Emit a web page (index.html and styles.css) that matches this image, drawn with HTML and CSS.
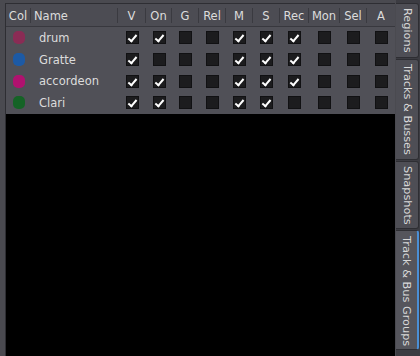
FILE: index.html
```html
<!DOCTYPE html>
<html lang="en">
<head>
    <meta charset="UTF-8">
    <title>Track & Bus Groups</title>
    <link rel="stylesheet" href="styles.css">
</head>
<body>
    <div class="window">
        <div class="main">
            <div class="tree">
                <div class="row head">
                    <div class="cell col-c sep">Col</div>
                    <div class="cell col-n sep">Name</div>
                    <div class="cell sep">V</div>
                    <div class="cell sep">On</div>
                    <div class="cell sep">G</div>
                    <div class="cell sep">Rel</div>
                    <div class="cell sep">M</div>
                    <div class="cell sep">S</div>
                    <div class="cell sep">Rec</div>
                    <div class="cell sep">Mon</div>
                    <div class="cell sep">Sel</div>
                    <div class="cell">A</div>
                </div>
                <div class="row">
                    <div class="cell col-c"><span class="swatch drum"></span></div>
                    <div class="cell col-n name">drum</div>
                    <div class="cell"><span class="box on"></span></div>
                    <div class="cell"><span class="box on"></span></div>
                    <div class="cell"><span class="box"></span></div>
                    <div class="cell"><span class="box"></span></div>
                    <div class="cell"><span class="box on"></span></div>
                    <div class="cell"><span class="box on"></span></div>
                    <div class="cell"><span class="box on"></span></div>
                    <div class="cell"><span class="box"></span></div>
                    <div class="cell"><span class="box"></span></div>
                    <div class="cell"><span class="box"></span></div>
                </div>
                <div class="row">
                    <div class="cell col-c"><span class="swatch gratte"></span></div>
                    <div class="cell col-n name">Gratte</div>
                    <div class="cell"><span class="box on"></span></div>
                    <div class="cell"><span class="box"></span></div>
                    <div class="cell"><span class="box"></span></div>
                    <div class="cell"><span class="box"></span></div>
                    <div class="cell"><span class="box on"></span></div>
                    <div class="cell"><span class="box on"></span></div>
                    <div class="cell"><span class="box on"></span></div>
                    <div class="cell"><span class="box"></span></div>
                    <div class="cell"><span class="box"></span></div>
                    <div class="cell"><span class="box"></span></div>
                </div>
                <div class="row">
                    <div class="cell col-c"><span class="swatch accordeon"></span></div>
                    <div class="cell col-n name">accordeon</div>
                    <div class="cell"><span class="box on"></span></div>
                    <div class="cell"><span class="box on"></span></div>
                    <div class="cell"><span class="box"></span></div>
                    <div class="cell"><span class="box"></span></div>
                    <div class="cell"><span class="box on"></span></div>
                    <div class="cell"><span class="box on"></span></div>
                    <div class="cell"><span class="box on"></span></div>
                    <div class="cell"><span class="box"></span></div>
                    <div class="cell"><span class="box"></span></div>
                    <div class="cell"><span class="box"></span></div>
                </div>
                <div class="row">
                    <div class="cell col-c"><span class="swatch clari"></span></div>
                    <div class="cell col-n name">Clari</div>
                    <div class="cell"><span class="box on"></span></div>
                    <div class="cell"><span class="box on"></span></div>
                    <div class="cell"><span class="box"></span></div>
                    <div class="cell"><span class="box"></span></div>
                    <div class="cell"><span class="box on"></span></div>
                    <div class="cell"><span class="box on"></span></div>
                    <div class="cell"><span class="box"></span></div>
                    <div class="cell"><span class="box"></span></div>
                    <div class="cell"><span class="box"></span></div>
                    <div class="cell"><span class="box"></span></div>
                </div>
                <div class="empty"></div>
            </div>
        </div>
        <div class="tabs">
            <div class="tab">Regions</div>
            <div class="tab">Tracks &amp; Busses</div>
            <div class="tab">Snapshots</div>
            <div class="tab active">Track &amp; Bus Groups</div>
        </div>
    </div>
</body>
</html>
```

FILE: styles.css
```css
* {
    box-sizing: border-box;
    margin: 0;
    padding: 0;
}
body {
    width: 420px;
    height: 356px;
    background: #3c3c42;
    font-family: "DejaVu Sans", sans-serif;
    font-size: 11px;
    color: #dcdcdc;
    overflow: hidden;
}
.window {
    display: flex;
    height: 356px;
}
.main {
    flex: 1;
    display: flex;
    padding: 3px 1px 0 5px;
    background: #4a4a50;
}
.tree {
    flex: 1;
    display: flex;
    flex-direction: column;
    border-left: 1px solid #2e2e33;
    border-top: 1px solid #2e2e33;
}
.row {
    display: grid;
    grid-template-columns: 25px 87px 28px 26px 27px 27px 27px 27px 29px 31px 27px 1fr;
    height: 21.7px;
    background: #505057;
}
.row.head {
    height: 23px;
    padding-top: 1px;
    font-size: 11.5px;
    background: #4c4c53;
    border-bottom: 1px solid #38383e;
}
.cell {
    display: flex;
    align-items: center;
    justify-content: center;
}
.head .cell.sep {
    border-right: 1px solid #3a3a40;
    margin: 3px 0;
}
.head .col-n {
    justify-content: flex-start;
    padding-left: 3px;
}
.name {
    justify-content: flex-start;
    padding-left: 8px;
    font-size: 11.5px;
}
.swatch {
    width: 12px;
    height: 13px;
    border-radius: 5px;
}
.drum { background: #8a2c55; }
.gratte { background: #1d5aa5; }
.accordeon { background: #b0126f; }
.clari { background: #156326; }
.box {
    width: 13px;
    height: 13px;
    background: #1c1c1e;
    border: 1px solid #111113;
    position: relative;
}
.box.on::after {
    content: "";
    position: absolute;
    left: 3px;
    top: 1px;
    width: 3px;
    height: 7px;
    border-right: 2px solid #ffffff;
    border-bottom: 2px solid #ffffff;
    transform: rotate(40deg);
}
.empty {
    flex: 1;
    background: #000000;
}
.tabs {
    width: 24px;
    flex-shrink: 0;
    display: flex;
    flex-direction: column;
    align-items: flex-start;
    gap: 1px;
    padding: 3px 1px 0 0;
    background: #3c3c42;
}
.tab {
    writing-mode: vertical-rl;
    white-space: nowrap;
    width: 23px;
    background: #4e4e55;
    border: 1px solid #2e2e33;
    border-left: none;
    border-radius: 0 3px 3px 0;
    padding: 4px 0;
    text-align: center;
    line-height: 22px;
    font-size: 11.3px;
    color: #d8d8d8;
}
.tab.active {
    padding: 5px 0 3px;
    background: #55555c;
    border-right: 2px solid #4a8fd6;
}
```
